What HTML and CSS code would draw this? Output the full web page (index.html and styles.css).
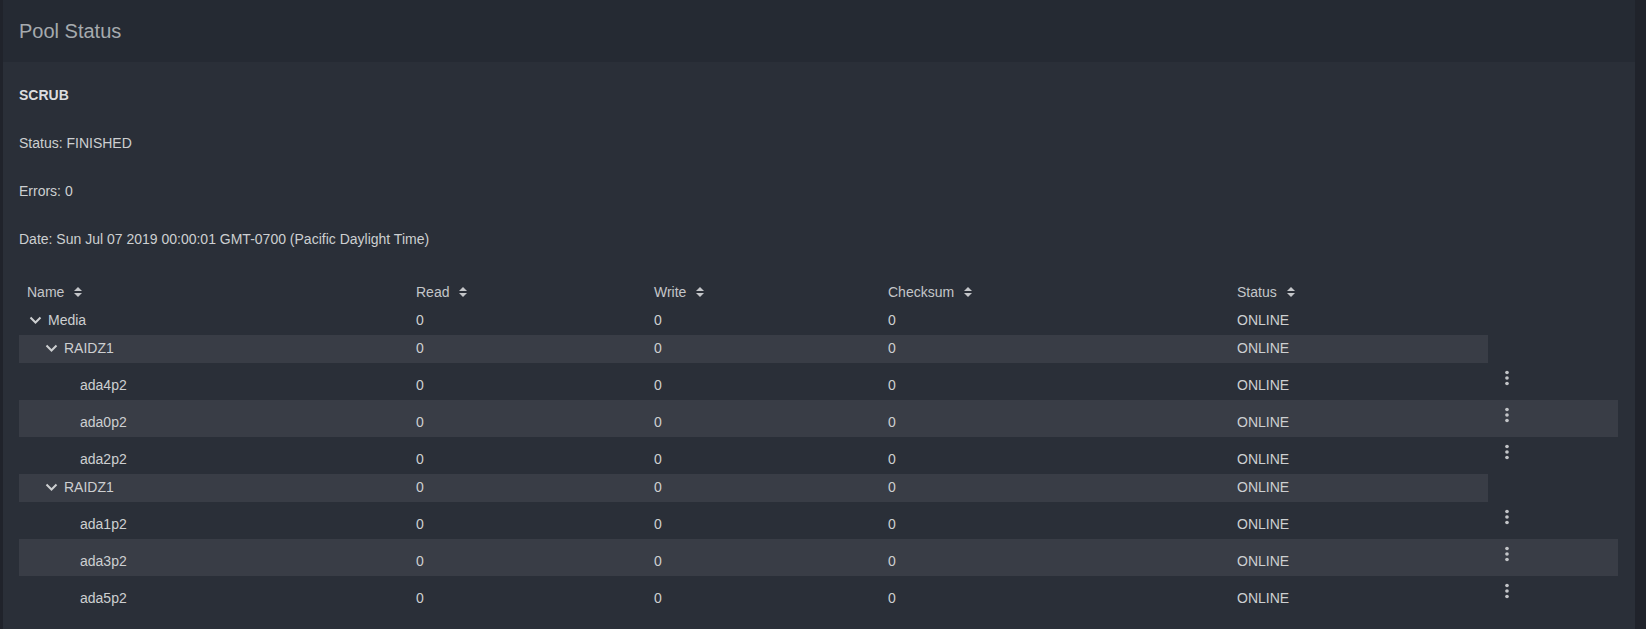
FILE: index.html
```html
<!DOCTYPE html>
<html lang="en">
<head>
    <meta charset="UTF-8">
    <meta name="viewport" content="width=device-width, initial-scale=1.0">
    <title>Pool Status</title>
    <link rel="stylesheet" href="styles.css">
</head>
<body>
    <div class="card">
        <div class="card-header">
            <h2>Pool Status</h2>
        </div>
        <div class="card-body">
            <div class="scrub">
                <p class="scrub-title">SCRUB</p>
                <p>Status: FINISHED</p>
                <p>Errors: 0</p>
                <p>Date: Sun Jul 07 2019 00:00:01 GMT-0700 (Pacific Daylight Time)</p>
            </div>

            <div class="tree-table">
                <div class="row head">
                    <div class="cell">Name <svg class="sort" width="8" height="12" viewBox="0 0 8 12"><path d="M0 5 L4 1 L8 5 Z M0 7 L4 11 L8 7 Z"/></svg></div>
                    <div class="cell">Read <svg class="sort" width="8" height="12" viewBox="0 0 8 12"><path d="M0 5 L4 1 L8 5 Z M0 7 L4 11 L8 7 Z"/></svg></div>
                    <div class="cell">Write <svg class="sort" width="8" height="12" viewBox="0 0 8 12"><path d="M0 5 L4 1 L8 5 Z M0 7 L4 11 L8 7 Z"/></svg></div>
                    <div class="cell">Checksum <svg class="sort" width="8" height="12" viewBox="0 0 8 12"><path d="M0 5 L4 1 L8 5 Z M0 7 L4 11 L8 7 Z"/></svg></div>
                    <div class="cell">Status <svg class="sort" width="8" height="12" viewBox="0 0 8 12"><path d="M0 5 L4 1 L8 5 Z M0 7 L4 11 L8 7 Z"/></svg></div>
                </div>

                <div class="row group">
                    <div class="cell name"><span class="toggle"><svg width="21" height="10" viewBox="0 0 21 10"><polyline points="3.5,2.5 8.5,7.5 13.5,2.5"/></svg></span>Media</div>
                    <div class="cell">0</div><div class="cell">0</div><div class="cell">0</div><div class="cell">ONLINE</div>
                </div>
                <div class="row group striped">
                    <div class="cell name level-1"><span class="toggle"><svg width="21" height="10" viewBox="0 0 21 10"><polyline points="3.5,2.5 8.5,7.5 13.5,2.5"/></svg></span>RAIDZ1</div>
                    <div class="cell">0</div><div class="cell">0</div><div class="cell">0</div><div class="cell">ONLINE</div>
                </div>
                <div class="row leaf">
                    <div class="cell name level-2">ada4p2</div>
                    <div class="cell">0</div><div class="cell">0</div><div class="cell">0</div><div class="cell">ONLINE</div>
                    <div class="cell actions"><svg class="kebab" width="22" height="22" viewBox="0 0 24 24"><circle cx="12" cy="6" r="2"/><circle cx="12" cy="12" r="2"/><circle cx="12" cy="18" r="2"/></svg></div>
                </div>
                <div class="row leaf striped">
                    <div class="cell name level-2">ada0p2</div>
                    <div class="cell">0</div><div class="cell">0</div><div class="cell">0</div><div class="cell">ONLINE</div>
                    <div class="cell actions"><svg class="kebab" width="22" height="22" viewBox="0 0 24 24"><circle cx="12" cy="6" r="2"/><circle cx="12" cy="12" r="2"/><circle cx="12" cy="18" r="2"/></svg></div>
                </div>
                <div class="row leaf">
                    <div class="cell name level-2">ada2p2</div>
                    <div class="cell">0</div><div class="cell">0</div><div class="cell">0</div><div class="cell">ONLINE</div>
                    <div class="cell actions"><svg class="kebab" width="22" height="22" viewBox="0 0 24 24"><circle cx="12" cy="6" r="2"/><circle cx="12" cy="12" r="2"/><circle cx="12" cy="18" r="2"/></svg></div>
                </div>
                <div class="row group striped">
                    <div class="cell name level-1"><span class="toggle"><svg width="21" height="10" viewBox="0 0 21 10"><polyline points="3.5,2.5 8.5,7.5 13.5,2.5"/></svg></span>RAIDZ1</div>
                    <div class="cell">0</div><div class="cell">0</div><div class="cell">0</div><div class="cell">ONLINE</div>
                </div>
                <div class="row leaf">
                    <div class="cell name level-2">ada1p2</div>
                    <div class="cell">0</div><div class="cell">0</div><div class="cell">0</div><div class="cell">ONLINE</div>
                    <div class="cell actions"><svg class="kebab" width="22" height="22" viewBox="0 0 24 24"><circle cx="12" cy="6" r="2"/><circle cx="12" cy="12" r="2"/><circle cx="12" cy="18" r="2"/></svg></div>
                </div>
                <div class="row leaf striped">
                    <div class="cell name level-2">ada3p2</div>
                    <div class="cell">0</div><div class="cell">0</div><div class="cell">0</div><div class="cell">ONLINE</div>
                    <div class="cell actions"><svg class="kebab" width="22" height="22" viewBox="0 0 24 24"><circle cx="12" cy="6" r="2"/><circle cx="12" cy="12" r="2"/><circle cx="12" cy="18" r="2"/></svg></div>
                </div>
                <div class="row leaf">
                    <div class="cell name level-2">ada5p2</div>
                    <div class="cell">0</div><div class="cell">0</div><div class="cell">0</div><div class="cell">ONLINE</div>
                    <div class="cell actions"><svg class="kebab" width="22" height="22" viewBox="0 0 24 24"><circle cx="12" cy="6" r="2"/><circle cx="12" cy="12" r="2"/><circle cx="12" cy="18" r="2"/></svg></div>
                </div>
            </div>
        </div>
    </div>
</body>
</html>
```

FILE: styles.css
```css
html, body {
    height: 100%;
}
body {
    font-family: "Liberation Sans", Arial, sans-serif;
    font-size: 14px;
    margin: 0;
    background-color: #20232b;
    color: #cdcfd1;
    overflow: hidden;
}
.card {
    margin: 0 11px 0 3px;
    min-height: 100%;
    background-color: #2a2f38;
    display: flex;
    flex-direction: column;
}
.card-header {
    height: 62px;
    background-color: #252a33;
    display: flex;
    align-items: center;
    padding: 0 16px;
}
.card-header h2 {
    margin: 0;
    font-size: 20px;
    font-weight: normal;
    color: #a6aaae;
}
.card-body {
    flex: 1;
    padding: 23px 16px 0;
}
.scrub p {
    margin: 0 0 28px;
    line-height: 20px;
}
.scrub .scrub-title {
    font-weight: bold;
    color: #dcdddf;
}
.tree-table {
    display: flex;
    flex-direction: column;
    align-items: flex-start;
}
.row {
    display: grid;
    grid-template-columns: 389px 238px 234px 349px 259px;
}
.row.leaf {
    grid-template-columns: 389px 238px 234px 349px 259px 130px;
    height: 37px;
}
.row.striped {
    background-color: #393d46;
}
.cell {
    padding: 0 8px 2px;
    line-height: 26px;
    white-space: nowrap;
}
.row.leaf .cell {
    padding-top: 9px;
}
.row.leaf .cell.actions {
    padding-top: 4px;
    line-height: 0;
}
.row.head .cell {
    padding-bottom: 0;
    line-height: 30px;
    color: #c4c6c9;
}
.sort {
    fill: #c4c6c9;
    vertical-align: -1px;
    margin-left: 6px;
}
.name {
    display: flex;
    align-items: center;
}
.name.level-1 {
    padding-left: 24px;
}
.name.level-2 {
    padding-left: 61px;
}
.toggle {
    display: inline-flex;
    width: 21px;
}
.toggle polyline {
    fill: none;
    stroke: #cdcfd1;
    stroke-width: 2;
}
.kebab {
    fill: #c3c5c8;
}
```
